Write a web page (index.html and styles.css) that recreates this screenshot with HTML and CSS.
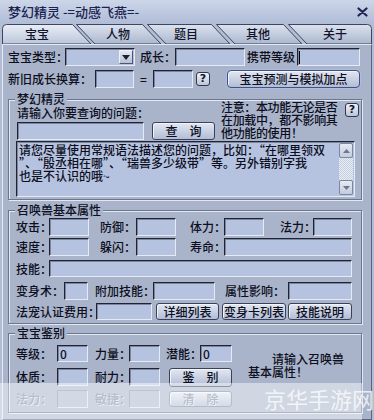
FILE: index.html
```html
<!DOCTYPE html>
<html lang="zh-CN">
<head>
<meta charset="utf-8">
<title>梦幻精灵</title>
<link rel="stylesheet" href="styles.css">
</head>
<body>
<div class="win">
  <div class="titlebar">
    <span class="title">梦幻精灵 -=动感飞燕=-</span>
    <svg class="close" width="11" height="10" viewBox="0 0 11 10"><path d="M1.5 1.5L9.5 8.5M9.5 1.5L1.5 8.5" stroke="#1c2350" stroke-width="2.2" stroke-linecap="round"/></svg>
  </div>
  <div class="tabs">
    <div class="tab">宝宝</div>
    <div class="tab">人物</div>
    <div class="tab">题目</div>
    <div class="tab">其他</div>
    <div class="tab">关于</div>
  </div>
  <div class="content">
    <div class="row">
      <span class="lb w57">宝宝类型：</span>
      <div class="tb sel w70"><span class="dd"><svg width="8" height="5" viewBox="0 0 8 5"><path d="M0 0H8L4 5Z" fill="#1a1f33"/></svg></span></div>
      <span class="lb ml5 w35">成长：</span>
      <div class="tb w70"></div>
      <span class="lb ml2 w50">携带等级</span>
      <div class="tb w63"><span class="caret"></span></div>
    </div>
    <div class="row r2">
      <span class="lb w87">新旧成长换算：</span>
      <div class="tb w39"></div>
      <span class="lb eq">=</span>
      <div class="tb w40"></div>
      <span class="qbtn ml3">?</span>
      <span class="btn glow ml17 w133">宝宝预测与模拟加点</span>
    </div>

    <fieldset class="grp g1">
      <legend>梦幻精灵</legend>
      <div class="ask">
        <div class="askl">
          <div class="asklb">请输入你要查询的问题：</div>
          <div class="row">
            <div class="tb ml1 w127"></div>
            <span class="btn ml8 w63">查　询</span>
          </div>
        </div>
        <div class="notice">注意：本功能无论是否<br>在加载中，都不影响其<br>他功能的使用！</div>
        <span class="qbtn qn">?</span>
      </div>
      <div class="ta">
        <div class="tatext">请您尽量使用常规语法描述您的问题，比如：“在哪里领双<br>”、“殷丞相在哪”、“瑞兽多少级带”等。另外错别字我<br>也是不认识的哦~</div>
        <div class="sb">
          <span class="sbb"><svg width="7" height="4" viewBox="0 0 7 4"><path d="M0 4H7L3.5 0Z" fill="#6b7690"/></svg></span>
          <span class="sbt"></span>
          <span class="sbb"><svg width="7" height="4" viewBox="0 0 7 4"><path d="M0 0H7L3.5 4Z" fill="#6b7690"/></svg></span>
        </div>
      </div>
    </fieldset>

    <fieldset class="grp g2">
      <legend>召唤兽基本属性</legend>
      <div class="row ra">
        <span class="lb w33">攻击：</span><div class="tb w40"></div>
        <span class="lb ml11 w36">防御：</span><div class="tb w40"></div>
        <span class="lb ml14 w34">体力：</span><div class="tb w40"></div>
        <span class="lb ml16 w33">法力：</span><div class="tb w39"></div>
      </div>
      <div class="row rb">
        <span class="lb w33">速度：</span><div class="tb w40"></div>
        <span class="lb ml11 w36">躲闪：</span><div class="tb w40"></div>
        <span class="lb ml14 w34">寿命：</span><div class="tb w128"></div>
      </div>
      <div class="row rc">
        <span class="lb w33">技能：</span><div class="tb w303 h17"></div>
      </div>
      <div class="row rd">
        <span class="lb w48">变身术：</span><div class="tb w24"></div>
        <span class="lb ml7 w58">附加技能：</span><div class="tb w62"></div>
        <span class="lb ml10 w63">属性影响：</span><div class="tb w64"></div>
      </div>
      <div class="row re">
        <span class="lb w80">法宠认证费用：</span><div class="tb w56 h17"></div>
        <span class="btn ml4 w63 h17">详细列表</span>
        <span class="btn ml3 w64 h17">变身卡列表</span>
        <span class="btn ml2 w64 h17">技能说明</span>
      </div>
    </fieldset>

    <fieldset class="grp g3">
      <legend>宝宝鉴别</legend>
      <div class="jb">
        <div class="jbl">
          <div class="row rj1">
            <span class="lb w41">等级：</span><div class="tb w31 h17 val">0</div>
            <span class="lb ml7 w34">力量：</span><div class="tb w31 h17"></div>
            <span class="lb ml6 w34">潜能：</span><div class="tb w32 h17 val">0</div>
          </div>
          <div class="row rj2">
            <span class="lb w41">体质：</span><div class="tb w31"></div>
            <span class="lb ml7 w34">耐力：</span><div class="tb w31"></div>
            <span class="btn ml9 w63 h19">鉴　别</span>
          </div>
          <div class="row rj3">
            <span class="lb dis w41">法力：</span><div class="tb off w31"></div>
            <span class="lb dis ml7 w34">敏捷：</span><div class="tb off w31"></div>
            <span class="btn off ml9 w63 h16">清　除</span>
          </div>
        </div>
        <div class="hint">请输入召唤兽<br>基本属性！</div>
      </div>
    </fieldset>
  </div>
  <div class="wm"><span>京华手游网</span></div>
</div>
</body>
</html>
```
FILE: styles.css
```css
* { box-sizing: border-box; }
html, body { margin: 0; padding: 0; }
body {
  width: 374px; height: 420px; overflow: hidden;
  background: #b1bcd3;
  font-family: "Noto Sans CJK SC", "Noto Sans", sans-serif;
  font-size: 12px; line-height: 14px; color: #0d0f1e; font-weight: 500;
}
.win { position: relative; width: 374px; height: 420px; display: flex; flex-direction: column; }

.titlebar {
  flex: none; height: 23px;
  display: flex; align-items: center; justify-content: space-between;
  padding: 0 6px 0 8px;
  background: linear-gradient(#cdd6e8, #b0bdd8);
}
.title { font-size: 13px; line-height: 15px; color: #1b2250; }
.close { display: block; margin-top: 1px; }

.tabs {
  flex: none; height: 21px;
  display: grid; grid-template-columns: 74px 88px 48px 96px 58px;
  background: #b3bed5 url("data:image/svg+xml,<svg xmlns='http://www.w3.org/2000/svg' width='374' height='21'><defs><linearGradient id='a' x1='0' y1='0' x2='0' y2='1'><stop offset='0' stop-color='%23dce2ee'/><stop offset='1' stop-color='%23abb7ce'/></linearGradient><linearGradient id='b' x1='0' y1='0' x2='0' y2='1'><stop offset='0' stop-color='%23e9edf5'/><stop offset='1' stop-color='%23bcc6db'/></linearGradient></defs><g stroke='%233b4660' stroke-width='1'><path d='M307 21L288.5 1.5H367.5Q371.5 1.5 371.5 5.5V21Z' fill='url(%23a)'/><path d='M235 21L216.5 1.5H283.5L302 21Z' fill='url(%23a)'/><path d='M166 21L147.5 1.5H211.5L230 21Z' fill='url(%23a)'/><path d='M95 21L76.5 1.5H142.5L161 21Z' fill='url(%23a)'/><path d='M2.5 21V5.5Q2.5 1.5 6.5 1.5H72.5L91 21Z' fill='url(%23b)'/></g></svg>") no-repeat 0 0;
}
.tab { display: flex; align-items: center; justify-content: center; padding-top: 1px; color: #10132a; }

.content {
  flex: 1; min-height: 0;
  margin: 0 2px;
  border: 1px solid; border-color: #e4e9f3 #5b667e #5b667e #e4e9f3;
  background: #a9b4ca;
  padding: 3px 0 0 5px;
  display: flex; flex-direction: column;
}

.row { display: flex; align-items: center; height: 18px; flex: none; }
.r2 { margin-top: 4px; }
.lb { flex: none; white-space: nowrap; }
.eq { width: 19px; text-align: center; }

.tb {
  flex: none; height: 18px;
  background: #b6c3e0;
  border: 1px solid; border-color: #1f2333 #e5eaf4 #e5eaf4 #1f2333;
  box-shadow: inset 1px 1px 0 #7b869c;
  display: flex; align-items: center;
}
.tb.val { padding-left: 2px; line-height: 14px; }
.tb.off { background: #adb8ce; border-color: #8a93a8 #dfe4ee #dfe4ee #8a93a8; box-shadow: none; }
.caret { width: 1px; height: 13px; background: #000; margin-left: 1px; }
.sel { justify-content: flex-end; }
.dd {
  width: 14px; height: 14px; margin-right: 1px;
  display: flex; align-items: center; justify-content: center;
  background: linear-gradient(#e4e8f1, #b7c1d7);
  border: 1px solid; border-color: #eef1f7 #4d576d #4d576d #eef1f7;
}

.btn {
  flex: none; height: 18px;
  display: flex; align-items: center; justify-content: center;
  background: linear-gradient(#e2e7f1, #b2bdd5);
  border: 1px solid #39425a; border-radius: 3px;
  box-shadow: inset 1px 1px 0 #f2f4f9;
  white-space: nowrap; color: #0d0f1e;
}
.btn.glow { border-color: #44527c; box-shadow: 0 0 0 1px #a9bdea, inset 1px 1px 0 #f2f4f9; border-radius: 4px; }
.btn.off { color: #7f889d; border-color: #7d879c; text-shadow: 1px 1px 0 #e0e5ee; }
.dis { color: #7f889d; text-shadow: 1px 1px 0 #d9dfea; }

.qbtn {
  flex: none; width: 14px; height: 14px;
  display: flex; align-items: center; justify-content: center;
  background: linear-gradient(#eef1f7, #bcc6da);
  border: 1px solid #2e3650; border-radius: 3px;
  font-family: "DejaVu Sans", sans-serif; font-weight: bold; font-size: 11px; line-height: 12px; color: #10132a;
}

.grp {
  flex: none; width: 354px; min-width: 0;
  margin: 0; padding: 0 6px 2px 7px;
  border: 1px solid #6c778f;
  box-shadow: inset 1px 1px 0 #e2e7f1, 1px 1px 0 #e2e7f1;
}
.grp legend { padding: 0 2px; margin-left: -1px; height: 12px; line-height: 12px; background: #a9b4ca; }
.g1 { margin-top: 5px; }
.g2 { margin-top: 4px; padding-bottom: 3px; }
.g3 { margin-top: 3px; padding-bottom: 4px; }

.ask { display: flex; align-items: flex-start; }
.askl { width: 200px; flex: none; }
.asklb { margin-top: 1px; padding-left: 1px; height: 14px; white-space: nowrap; }
.askl .row { margin-top: 2px; }
.notice { flex: none; width: 120px; margin: -5px 0 0 5px; line-height: 13px; white-space: nowrap; letter-spacing: -0.35px; }
.qn { margin: -2px 0 0 4px; }

.ta {
  margin-top: 1px; width: 339px; height: 56px;
  display: flex;
  background: #b6c3e0;
  border: 1px solid; border-color: #1f2333 #e5eaf4 #e5eaf4 #1f2333;
  box-shadow: inset 1px 1px 0 #7b869c;
}
.tatext { flex: 1; padding: 1px 0 0 2px; line-height: 13px; white-space: nowrap; overflow: hidden; }
.sb { flex: none; width: 14px; margin: 1px 1px 1px 0; display: flex; flex-direction: column; }
.sbb {
  flex: none; height: 15px;
  display: flex; align-items: center; justify-content: center;
  background: linear-gradient(#e7ebf3, #c3ccde);
  border: 1px solid #7d889f; border-radius: 2px;
}
.sbt { flex: 1; background: repeating-conic-gradient(#c6cee0 0 25%, #e8ecf3 0 50%) 0 0 / 2px 2px; }

.ra { margin-top: 2px; }
.rb { margin-top: 2px; }
.rc { margin-top: 4px; height: 17px; }
.rd { margin-top: 5px; }
.re { margin-top: 3px; height: 17px; }

.jb { display: flex; align-items: flex-start; }
.jbl { flex: none; width: 216px; }
.rj1 { margin-top: 6px; height: 17px; }
.rj2 { margin-top: 6px; }
.rj3 { margin-top: 4px; }
.hint { flex: none; width: 96px; margin: 13px 0 0 16px; text-indent: 24px; line-height: 13px; white-space: nowrap; }

.h16 { height: 16px; } .h17 { height: 17px; } .h19 { height: 19px; }
.ml1 { margin-left: 1px; } .ml2 { margin-left: 2px; } .ml3 { margin-left: 3px; } .ml4 { margin-left: 4px; }
.ml5 { margin-left: 5px; } .ml6 { margin-left: 6px; } .ml7 { margin-left: 7px; } .ml8 { margin-left: 8px; }
.ml9 { margin-left: 9px; } .ml10 { margin-left: 10px; } .ml11 { margin-left: 11px; } .ml14 { margin-left: 14px; }
.ml16 { margin-left: 16px; } .ml17 { margin-left: 17px; }
.w24 { width: 24px; } .w31 { width: 31px; } .w32 { width: 32px; } .w33 { width: 33px; } .w34 { width: 34px; }
.w35 { width: 35px; } .w36 { width: 36px; } .w39 { width: 39px; } .w40 { width: 40px; } .w41 { width: 41px; }
.w48 { width: 48px; } .w50 { width: 50px; } .w56 { width: 56px; } .w57 { width: 57px; } .w58 { width: 58px; }
.w62 { width: 62px; } .w63 { width: 63px; } .w64 { width: 64px; } .w70 { width: 70px; } .w80 { width: 80px; }
.w87 { width: 87px; } .w127 { width: 127px; } .w128 { width: 128px; } .w133 { width: 133px; } .w303 { width: 303px; }

.wm {
  position: absolute; left: 0; right: 12px; top: 383px; bottom: 0;
  background: rgba(255, 255, 255, 0.45);
}
.wm span {
  display: block; margin-right: -12px;
  text-align: right; font-size: 22px; line-height: 30px; font-weight: 400;
  color: rgba(255, 255, 255, 0.75);
}
```
